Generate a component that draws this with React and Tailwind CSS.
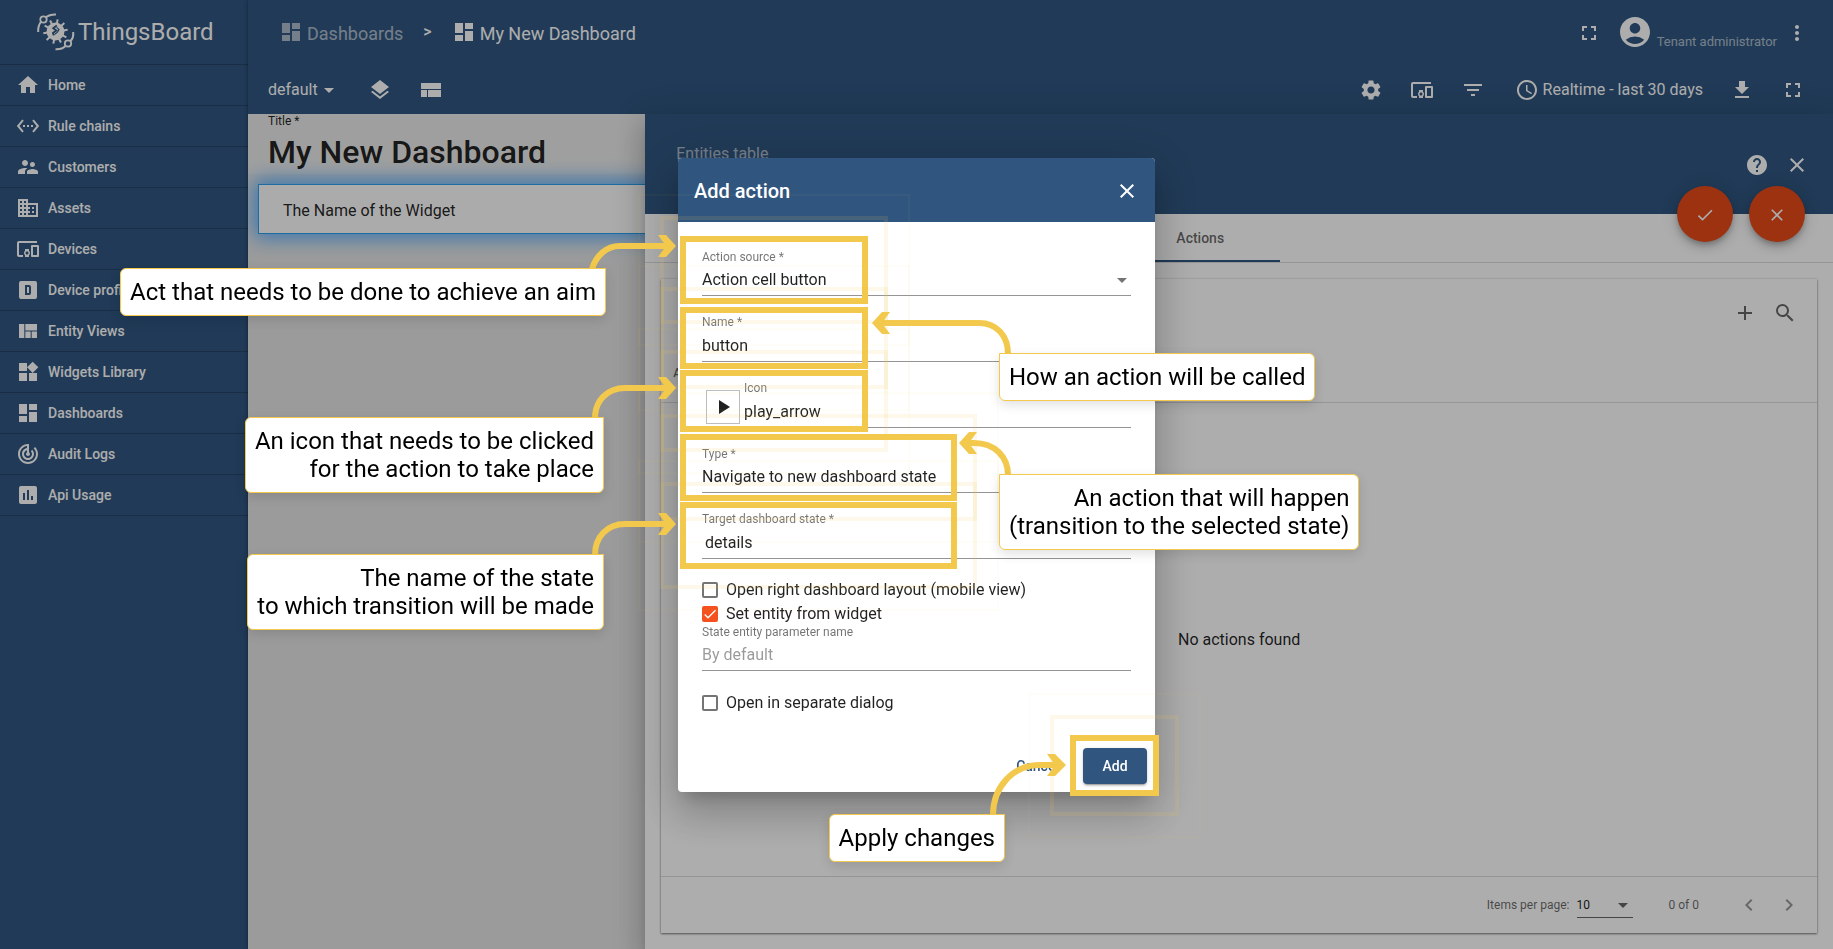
import React from "react";
import {
  MdAccessTime,
  MdAccountCircle,
  MdAdd,
  MdArrowDropDown,
  MdCheck,
  MdChevronLeft,
  MdChevronRight,
  MdClose,
  MdDashboard,
  MdDevicesOther,
  MdDomain,
  MdFilterList,
  MdFullscreen,
  MdHelp,
  MdHome,
  MdInsertChart,
  MdLayers,
  MdMoreVert,
  MdPlayArrow,
  MdSearch,
  MdSettings,
  MdSettingsEthernet,
  MdSupervisorAccount,
  MdTrackChanges,
  MdViewQuilt,
  MdWidgets,
} from "react-icons/md";

function AlphaDBoxIcon(props) {
  return (
    <svg viewBox="0 0 24 24" fill="currentColor" fillRule="evenodd" aria-hidden="true" {...props}>
      <path d="M9,7H13A2,2 0 0,1 15,9V15A2,2 0 0,1 13,17H9V7M11,9V15H13V9H11M5,3H19A2,2 0 0,1 21,5V19A2,2 0 0,1 19,21H5A2,2 0 0,1 3,19V5A2,2 0 0,1 5,3Z" />
    </svg>
  );
}

function ViewCompactIcon(props) {
  return (
    <svg viewBox="0 0 24 24" fill="currentColor" aria-hidden="true" {...props}>
      <path d="M2 19h6v-7H2v7zm7 0h13v-7H9v7zM2 5v6h20V5H2z" />
    </svg>
  );
}

function DownloadIcon(props) {
  return (
    <svg viewBox="0 0 24 24" fill="currentColor" aria-hidden="true" {...props}>
      <path d="M19 9h-4V3H9v6H5l7 7 7-7zM5 18v2h14v-2H5z" />
    </svg>
  );
}

const teeth = [10, 46, 82, 118, 154, 190, 226, 262, 298, 334];

function Logo() {
  return (
    <svg viewBox="0 0 40 40" className="size-10" fill="none" stroke="white" aria-hidden="true">
      <circle cx="19.500" cy="19.500" r="9" fill="white" stroke="none" />
      {teeth.map((a) => (
        <path key={a} d="M19.500 12V7.200" strokeWidth="2" transform={`rotate(${a} 19.5 19.5)`} />
      ))}
      <path
        d="M20.800 13.600 17.200 16.200 20.400 18.600 17 21 17.600 23.400"
        stroke="#305680"
        strokeWidth="1.800"
      />
      <path d="M20.600 15.400 23 17.600 21.400 20.200 18.400 22.600" stroke="#305680" strokeWidth="1.200" />
      <circle cx="7.500" cy="7.500" r="3.200" strokeWidth="1.800" />
      <path d="M10 5.200C12.500 3 16 2.300 20 2.400" strokeWidth="2" />
      <path d="M5 9.800C2.600 12.500 2 16 2.200 20" strokeWidth="2" />
      <circle cx="32" cy="31.500" r="3.200" strokeWidth="1.800" />
      <path d="M34.500 29C37 26.500 37.600 23.500 37.200 20" strokeWidth="2" />
      <path d="M29.500 34C27 36.600 23.500 37.400 19.500 37.200" strokeWidth="2" />
    </svg>
  );
}

const menu = [
  { label: "Home", icon: MdHome },
  { label: "Rule chains", icon: MdSettingsEthernet },
  { label: "Customers", icon: MdSupervisorAccount },
  { label: "Assets", icon: MdDomain },
  { label: "Devices", icon: MdDevicesOther },
  { label: "Device profiles", icon: AlphaDBoxIcon },
  { label: "Entity Views", icon: MdViewQuilt },
  { label: "Widgets Library", icon: MdWidgets },
  { label: "Dashboards", icon: MdDashboard },
  { label: "Audit Logs", icon: MdTrackChanges },
  { label: "Api Usage", icon: MdInsertChart },
];

function Sidebar() {
  return (
    <aside className="w-[248px] shrink-0 bg-[#305680] text-white">
      <div className="flex h-16 items-center pl-9">
        <Logo />
        <span className="ml-0.5 text-2xl leading-8">ThingsBoard</span>
      </div>
      <nav>
        {menu.map(({ label, icon: Icon }) => (
          <a
            key={label}
            href="#"
            className="flex h-[41px] items-center gap-2 border-t border-black/20 pl-4 text-sm font-medium last:h-[42px] last:border-b"
          >
            <Icon className="size-6" />
            {label}
          </a>
        ))}
      </nav>
    </aside>
  );
}

function IconButton({ label, icon: Icon, size = "size-6", className = "" }) {
  return (
    <button type="button" aria-label={label} className={className}>
      <Icon className={size} />
    </button>
  );
}

function Header() {
  return (
    <header className="bg-[#305680] text-white">
      <div className="flex h-16 items-center justify-between pr-6 pl-[31px]">
        <nav className="flex items-center gap-5 text-lg">
          <a href="#" className="flex items-center gap-1 opacity-60">
            <MdDashboard className="size-6" />
            <span className="pt-1">Dashboards</span>
          </a>
          <span className="text-base font-medium">&gt;</span>
          <a href="#" className="flex items-center gap-1">
            <MdDashboard className="size-6" />
            <span className="pt-1">My New Dashboard</span>
          </a>
        </nav>
        <div className="flex items-center">
          <IconButton label="Fullscreen" icon={MdFullscreen} className="mt-0.5 mr-4" />
          <MdAccountCircle className="size-9" />
          <span className="mr-2 ml-1 pt-5 text-[13px] leading-5 opacity-60">Tenant administrator</span>
          <IconButton label="More" icon={MdMoreVert} className="mt-0.5" />
        </div>
      </div>
      <div className="flex h-[50px] items-center justify-between pt-0.5 pr-7 pl-5">
        <div className="flex items-center gap-[27px]">
          <button type="button" className="flex items-center">
            default
            <MdArrowDropDown className="-ml-px size-6" />
          </button>
          <IconButton label="Layers" icon={MdLayers} />
          <IconButton label="Layouts" icon={ViewCompactIcon} />
        </div>
        <div className="flex items-center gap-[27px]">
          <IconButton label="Settings" icon={MdSettings} />
          <IconButton label="Aliases" icon={MdDevicesOther} />
          <IconButton label="Filters" icon={MdFilterList} />
          <button type="button" className="ml-[3px] flex items-center gap-1">
            <MdAccessTime className="size-6" />
            Realtime - last 30 days
          </button>
          <IconButton label="Export" icon={DownloadIcon} />
          <IconButton label="Expand" icon={MdFullscreen} />
        </div>
      </div>
    </header>
  );
}

function DashboardPane() {
  return (
    <section className="min-w-0 flex-1 overflow-hidden bg-[#e5e5e5]">
      <div className="h-[60px] bg-[#ebebeb] pl-5 whitespace-nowrap">
        <div className="pt-px text-xs leading-3">Title *</div>
        <h1 className="pt-[7px] text-[32px] leading-9 font-medium">My New Dashboard</h1>
      </div>
      <div className="pt-2.5 pl-2.5">
        <div className="h-[50px] w-[480px] border border-[#2a9fee] bg-[#fcfcfc] pl-6 leading-[51px] shadow-[0_0_20px_4px_#55adff]">
          The Name of the Widget
        </div>
      </div>
    </section>
  );
}

function DetailsDrawer() {
  return (
    <section className="relative flex w-[calc(75%-1px)] flex-col bg-white shadow-[0_8px_10px_-5px_rgba(0,0,0,0.2),0_16px_24px_2px_rgba(0,0,0,0.14),0_6px_30px_5px_rgba(0,0,0,0.12)]">
      <div className="flex h-[100px] justify-between bg-[#305680] pr-6 pl-[31px] text-white">
        <div className="pt-7 opacity-60">Entities table</div>
        <div className="flex h-[102px] items-center gap-4">
          <IconButton label="Help" icon={MdHelp} />
          <IconButton label="Close details" icon={MdClose} />
        </div>
      </div>
      <div className="absolute top-[72px] right-7 flex gap-4 text-white">
        {[
          ["Apply", MdCheck],
          ["Discard", MdClose],
        ].map(([label, Icon]) => (
          <button
            key={label}
            type="button"
            aria-label={label}
            className="flex size-14 items-center justify-center rounded-full bg-[#e64a19] pt-0.5 shadow-[0_3px_5px_-1px_rgba(0,0,0,0.2),0_6px_10px_0_rgba(0,0,0,0.14),0_1px_18px_0_rgba(0,0,0,0.12)]"
          >
            <Icon className="size-5" />
          </button>
        ))}
      </div>
      <div className="h-[49px] border-b border-[#dcdcdc] pl-[475px]">
        <button
          type="button"
          className="h-12 w-40 border-b-2 border-[#305680] pt-0.5 text-sm font-medium text-black/60"
        >
          Actions
        </button>
      </div>
      <div className="flex flex-1 flex-col p-4">
        <div className="flex flex-1 flex-col shadow-[0_1px_2px_rgba(0,0,0,0.5),0_0_2px_rgba(0,0,0,0.15)]">
          <div className="flex h-[67px] items-center justify-end gap-4 pr-5 text-black/60">
            <IconButton label="Add action" icon={MdAdd} />
            <IconButton label="Search" icon={MdSearch} />
          </div>
          <div className="h-[57px] border-b border-[#dcdcdc] pl-3 text-xs leading-[54px] font-medium text-black/60">
            Action source
          </div>
          <div className="flex flex-1 items-center justify-center">No actions found</div>
          <div className="flex h-[57px] items-center justify-end border-t border-[#dcdcdc] pr-4 text-xs text-black/60">
            <label htmlFor="page-size">Items per page:</label>
            <div className="relative ml-[7px] flex w-14 items-center border-b border-black/60">
              <select id="page-size" className="h-6 w-full appearance-none text-black/90" defaultValue="10">
                <option>10</option>
              </select>
              <MdArrowDropDown className="pointer-events-none absolute -right-0.5 size-6" />
            </div>
            <span className="mr-[38px] ml-9">0 of 0</span>
            <div className="flex gap-4 text-black/40">
              <IconButton label="Previous page" icon={MdChevronLeft} />
              <IconButton label="Next page" icon={MdChevronRight} />
            </div>
          </div>
        </div>
      </div>
    </section>
  );
}

function Field({ id, label, children }) {
  return (
    <div>
      <label htmlFor={id} className="block text-xs leading-4 text-black/55">
        {label}
      </label>
      {children}
    </div>
  );
}

function SelectField({ id, label, value }) {
  return (
    <Field id={id} label={label}>
      <div className="relative flex items-center border-b border-[#949494]">
        <select id={id} defaultValue={value} className="h-[30px] w-full appearance-none">
          <option>{value}</option>
        </select>
        <MdArrowDropDown className="pointer-events-none absolute -right-[3px] size-6 text-black/55" />
      </div>
    </Field>
  );
}

function Check({ id, label, checked = false }) {
  return (
    <div className="flex h-[22px] items-center gap-2">
      <span className="relative flex size-4">
        <input
          id={id}
          type="checkbox"
          defaultChecked={checked}
          className="peer size-4 appearance-none rounded-xs border-2 border-[#757575] checked:border-[#f4511e] checked:bg-[#f4511e]"
        />
        <svg
          viewBox="0 0 24 24"
          className="pointer-events-none absolute inset-0 hidden size-4 fill-none stroke-white stroke-2 peer-checked:block"
          aria-hidden="true"
        >
          <path d="M4.100 12.700 9 17.600 20.300 6.300" />
        </svg>
      </span>
      <label htmlFor={id}>{label}</label>
    </div>
  );
}

/* Highlight frame with two fading echoes around it. */
function Highlight({ place }) {
  return (
    <div className={`pointer-events-none absolute border-6 border-[#f2c94c] ${place}`}>
      <div className="absolute -inset-[26px] border-4 border-[#f2c94c]/12" />
      <div className="absolute -inset-12 border-2 border-[#f2c94c]/4" />
    </div>
  );
}

function Callout({ place, children }) {
  return (
    <div
      className={`absolute rounded-md border border-[#f2c94c] bg-white px-[9px] py-[9px] text-right text-2xl leading-7 whitespace-nowrap text-black shadow-[0_4px_12px_rgba(0,0,0,0.12)] ${place}`}
    >
      {children}
    </div>
  );
}

function Arrows() {
  return (
    <svg className="pointer-events-none absolute top-0 left-0 size-px overflow-visible" fill="none" aria-hidden="true">
      <g stroke="#f2c94c" strokeWidth="6">
        <path d="M-86 111C-82 98 -72 88 -58 88H-7" />
        <path d="M-83 260C-83 243 -71 230 -53 230H-7" />
        <path d="M-83 397C-83 379 -71 366 -53 366H-7" />
        <path d="M330 196C330 178 319 165 301 165H199" />
        <path d="M330 317C330 299 317 285 296 285H286" />
        <path d="M315 657C315 630 334 607 362 607H382" />
      </g>
      <g fill="#f2c94c">
        <path d="M-20 77h8L-2 88-12 99h-8l8-11z" />
        <path d="M-20 219h8L-2 230-12 241h-8l8-11z" />
        <path d="M-20 355h8L-2 366-12 377h-8l8-11z" />
        <path d="M212 154h-8L194 165 204 176h8l-8-11z" />
        <path d="M299 274h-8L281 285 291 296h8l-8-11z" />
        <path d="M369 596h8L388 607 377 618h-8l8-11z" />
      </g>
    </svg>
  );
}

function Annotations() {
  return (
    <>
      <Highlight place="top-[78px] left-0.5 h-[68px] w-[188px]" />
      <Highlight place="top-[149px] left-0.5 h-[62px] w-[188px]" />
      <Highlight place="top-[212px] left-0.5 h-[62px] w-[188px]" />
      <Highlight place="top-[276px] left-0.5 h-[67px] w-[277px]" />
      <Highlight place="top-[344px] left-0.5 h-[67px] w-[277px]" />
      <Highlight place="top-[577px] left-[392px] h-[61px] w-[89px]" />
      <Arrows />
      <Callout place="top-[110px] right-[549px] rounded-tr-none">
        Act that needs to be done to achieve an aim
      </Callout>
      <Callout place="top-[259px] right-[551px] rounded-tr-none">
        An icon that needs to be clicked
        <br />
        for the action to take place
      </Callout>
      <Callout place="top-[396px] right-[551px] rounded-tr-none">
        The name of the state
        <br />
        to which transition will be made
      </Callout>
      <Callout place="top-[195px] left-[321px] rounded-tl-none">How an action will be called</Callout>
      <Callout place="top-[316px] left-[321px] rounded-tl-none">
        An action that will happen
        <br />
        (transition to the selected state)
      </Callout>
      <Callout place="top-[656px] right-[150px] rounded-tr-none">Apply changes</Callout>
    </>
  );
}

function AddActionDialog() {
  return (
    <div
      role="dialog"
      aria-labelledby="dialog-title"
      className="relative w-[477px] rounded bg-white shadow-[0_11px_15px_-7px_rgba(0,0,0,0.2),0_24px_38px_3px_rgba(0,0,0,0.14),0_9px_46px_8px_rgba(0,0,0,0.12)]"
    >
      <form onSubmit={(e) => e.preventDefault()}>
        <div className="flex h-16 items-center justify-between rounded-t bg-[#305680] px-4 pt-0.5 text-white">
          <h2 id="dialog-title" className="text-xl font-medium">
            Add action
          </h2>
          <IconButton label="Close" icon={MdClose} />
        </div>
        <div className="flex flex-col gap-[18px] px-6 pt-[27px]">
          <SelectField id="source" label="Action source *" value="Action cell button" />
          <Field id="name" label="Name *">
            <input id="name" defaultValue="button" className="block h-8 w-full border-b border-[#949494]" />
          </Field>
          <div className="flex">
            <span className="mt-2.5 ml-1 flex size-[34px] shrink-0 items-center justify-center border border-[#bdbdbd]">
              <MdPlayArrow className="size-6" />
            </span>
            <div className="ml-1 flex-1">
              <Field id="icon" label="Icon">
                <input id="icon" defaultValue="play_arrow" className="block h-8 w-full border-b border-[#949494]" />
              </Field>
            </div>
          </div>
          <SelectField id="type" label="Type *" value="Navigate to new dashboard state" />
          <Field id="state" label="Target dashboard state *">
            <input id="state" defaultValue="details" className="block h-8 w-full border-b border-[#949494] pl-[3px]" />
          </Field>
        </div>
        <div className="flex flex-col px-6 pt-5">
          <Check id="right-layout" label="Open right dashboard layout (mobile view)" />
          <div className="h-0.5" />
          <Check id="set-entity" label="Set entity from widget" checked />
          <label htmlFor="param" className="text-xs leading-[14px] text-black/55">
            State entity parameter name
          </label>
          <input
            id="param"
            placeholder="By default"
            className="mb-[21px] h-8 border-b border-[#949494] placeholder:text-black/40"
          />
          <Check id="separate" label="Open in separate dialog" />
        </div>
        <div className="mt-[26px] flex h-[52px] items-center justify-end gap-2 p-2 text-sm font-medium">
          <button type="button" className="h-9 px-4 text-[#305680]">
            Cancel
          </button>
          <button
            type="submit"
            className="h-9 w-16 rounded bg-[#305680] text-white shadow-[0_3px_1px_-2px_rgba(0,0,0,0.2),0_2px_2px_0_rgba(0,0,0,0.14),0_1px_5px_0_rgba(0,0,0,0.12)]"
          >
            Add
          </button>
        </div>
      </form>
      <Annotations />
    </div>
  );
}

export default function App() {
  return (
    <div className="flex min-h-screen font-['Roboto',sans-serif] text-black/87">
      <Sidebar />
      <div className="flex min-w-0 flex-1 flex-col shadow-[0_0_4px_rgba(0,0,0,0.4)]">
        <Header />
        <main className="flex flex-1">
          <DashboardPane />
          <DetailsDrawer />
        </main>
      </div>
      <div className="fixed inset-0 flex items-center justify-center overflow-hidden bg-black/32">
        <AddActionDialog />
      </div>
    </div>
  );
}
